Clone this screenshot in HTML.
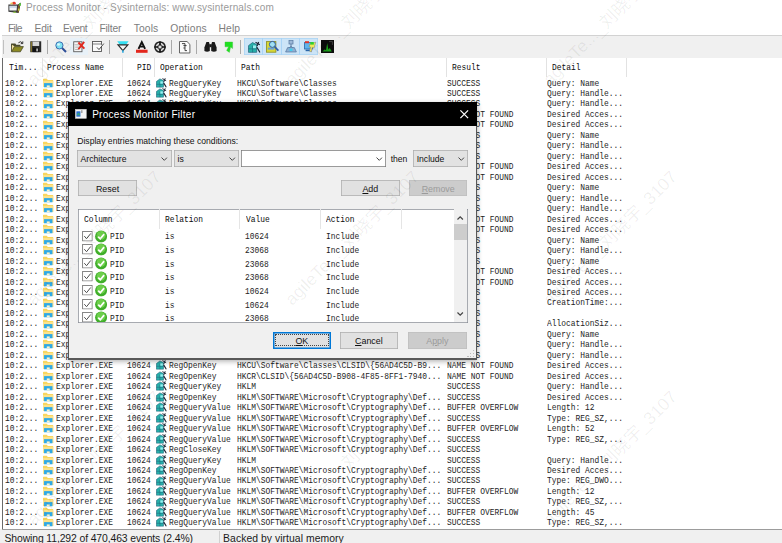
<!DOCTYPE html>
<html><head><meta charset="utf-8"><title>Process Monitor</title>
<style>
html,body{margin:0;padding:0;}
body{width:782px;height:543px;overflow:hidden;background:#fff;position:relative;font-family:"Liberation Sans","Noto Sans CJK SC",sans-serif;}
.t{position:absolute;white-space:pre;line-height:12px;font-family:"Liberation Sans","Noto Sans CJK SC",sans-serif;}
.m{position:absolute;white-space:pre;line-height:12px;font-family:"Liberation Mono","Noto Sans CJK SC",monospace;font-size:9.60px;transform:scaleX(0.8247);transform-origin:0 0;}
.r{position:absolute;}
.w{position:absolute;white-space:pre;font-size:17.5px;line-height:20px;color:rgba(0,0,0,.065);transform-origin:0 100%;transform:rotate(-45deg);font-family:"Liberation Sans","Noto Sans CJK SC",sans-serif;}
svg{position:absolute;overflow:visible;}
u{text-decoration:underline;text-underline-offset:0.5px;text-decoration-thickness:0.7px;}
</style></head><body>

<svg width="0" height="0" style="left:0;top:0"><defs>
<symbol id="fold" viewBox="0 0 10 9"><path d="M0 1.2 Q0 .6 .6 .6 H3.6 L4.6 1.8 H9.4 Q10 1.8 10 2.4 V8.4 H0 Z" fill="#f9d65f"/><rect x="0" y="2.8" width="10" height="5.8" fill="#fce28c"/><rect x="1" y="4.8" width="8" height="4.2" fill="#2fa9e6"/><rect x="3.6" y="7" width="2.8" height="2" fill="#fdf3c8"/></symbol>
<symbol id="reg" viewBox="0 0 11 10"><path d="M.4 3.6 L4 .9 L7.6 2.6 V9.5 H.4 Z" fill="#27b0aa" stroke="#1d5f78" stroke-width=".6"/><path d="M.4 6.4 H7.6 M4 3.6 V9.5" stroke="#1d5f78" stroke-width=".5"/><rect x="4.4" y="3.4" width="2.6" height="2.4" fill="#9af0f0"/><path d="M6.6 .6 L10.4 2.8 M9.4 .3 L8 4" stroke="#1a2433" stroke-width="1" fill="none"/><path d="M7.8 5 L10.6 9.6" stroke="#1a2433" stroke-width="1.1"/></symbol>
<symbol id="ball" viewBox="0 0 12 12"><circle cx="6" cy="6" r="5.9" fill="#3fae2a"/><circle cx="6" cy="5" r="4.4" fill="#7ed957" opacity=".75"/><path d="M3.2 6.2 L5.2 8.3 L9 3.8" stroke="#fff" stroke-width="1.7" fill="none"/></symbol>
<symbol id="chk" viewBox="0 0 10 10"><rect x=".4" y=".4" width="9.2" height="9.2" fill="#fff" stroke="#6e6e6e" stroke-width=".8"/><path d="M2 5 L4.2 7.4 L8.2 2.4" stroke="#444" stroke-width=".9" fill="none"/></symbol>
<symbol id="chev" viewBox="0 0 8 5"><path d="M.6 .6 L4 4 L7.4 .6" stroke="#3c3c3c" stroke-width="1.15" fill="none"/></symbol>
</defs></svg>

<svg style="left:7.8px;top:1px" width="13.4" height="12.6" viewBox="0 0 13.4 12.6"><path d="M.4 3.6 H10 L12.9 1.6 L10.6 12 L.4 10.8 Z" fill="#3b3b3b"/><path d="M1.4 4.8 H9 L8.6 9.6 H1.4 Z" fill="#f3f5f8"/><path d="M1.4 6 H9" stroke="#9db4cf" stroke-width=".9"/><path d="M10.2 4 L12.6 2.2 L10.8 11.6 L9.4 11.4 Z" fill="#7a5a2a"/><rect x="11.2" y="2.2" width="1.6" height="2.6" fill="#4fd03a"/><rect x="10" y="7.6" width="1.4" height="2" fill="#c8d43a"/><ellipse cx="6" cy="2.2" rx="1.8" ry="1.4" fill="#e23a2a"/><ellipse cx="3.6" cy="2.6" rx="1.3" ry="1" fill="#e8c95a"/><rect x="5.4" y="10.6" width="2.4" height="1.2" fill="#8ccf3a"/></svg>
<span class="t" style="left:26.00px;top:2.23px;font-size:10.00px;color:#9a9a9a;letter-spacing:0.162px;">Process Monitor - Sysinternals: www.sysinternals.com</span>
<span class="t" style="left:8.05px;top:22.73px;font-size:10.30px;color:#7d7d7d;letter-spacing:-0.749px;">File</span>
<span class="t" style="left:34.40px;top:22.73px;font-size:10.30px;color:#7d7d7d;letter-spacing:-0.083px;">Edit</span>
<span class="t" style="left:63.00px;top:22.73px;font-size:10.30px;color:#7d7d7d;letter-spacing:-0.410px;">Event</span>
<span class="t" style="left:99.40px;top:22.73px;font-size:10.30px;color:#7d7d7d;letter-spacing:-0.178px;">Filter</span>
<span class="t" style="left:133.70px;top:22.73px;font-size:10.30px;color:#7d7d7d;letter-spacing:0.114px;">Tools</span>
<span class="t" style="left:170.30px;top:22.73px;font-size:10.30px;color:#7d7d7d;letter-spacing:0.151px;">Options</span>
<span class="t" style="left:218.60px;top:22.73px;font-size:10.30px;color:#7d7d7d;letter-spacing:0.072px;">Help</span>
<div class="r" style="left:2.00px;top:35.80px;width:780.00px;height:22.00px;background:#f0f0f0;"></div>
<div class="r" style="left:2.00px;top:35.30px;width:780.00px;height:0.90px;background:#d2d2d2;"></div>
<div class="r" style="left:3.30px;top:40.00px;width:0.90px;height:13.60px;background:#c0c0c0;"></div>
<div class="r" style="left:46.60px;top:40.00px;width:0.90px;height:14.00px;background:#a9a9a9;"></div>
<div class="r" style="left:108.80px;top:40.00px;width:0.90px;height:14.00px;background:#a9a9a9;"></div>
<div class="r" style="left:171.20px;top:40.00px;width:0.90px;height:14.00px;background:#a9a9a9;"></div>
<div class="r" style="left:195.60px;top:40.00px;width:0.90px;height:14.00px;background:#a9a9a9;"></div>
<div class="r" style="left:239.60px;top:40.00px;width:0.90px;height:14.00px;background:#a9a9a9;"></div>
<div class="r" style="left:244.20px;top:37.80px;width:74.00px;height:16.80px;background:#cce4f7;box-shadow:inset 0 0 0 .75px #a9d3f5;"></div>
<div class="r" style="left:262.35px;top:37.80px;width:0.75px;height:16.80px;background:#a9d3f5;"></div>
<div class="r" style="left:280.85px;top:37.80px;width:0.75px;height:16.80px;background:#a9d3f5;"></div>
<div class="r" style="left:299.35px;top:37.80px;width:0.75px;height:16.80px;background:#a9d3f5;"></div>
<div class="r" style="left:70.00px;top:38.00px;width:18.00px;height:16.60px;background:#e8f1f8;"></div>
<svg style="left:11.20px;top:40.70px" width="12.80" height="11.20" viewBox="0 0 12.8 11.2"><path d="M.4 2.6 H4.4 L5.2 3.8 H9.4 V5.2 H.4 Z" fill="#4a4a2a"/><path d="M.6 3.4 L5.4 6.6 L.6 10.4 Z" fill="#f3e2a0"/><path d="M3.4 5.6 H12.4 L9.4 10.8 H.6 Z" fill="#8c8a24" stroke="#3a3a1a" stroke-width=".7"/><path d="M.5 2.8 V10.6" stroke="#3a3a1a" stroke-width=".8"/><path d="M7.4 1.8 Q9.6 -.4 11.4 2 M11.8 .4 V2.6 H9.8" stroke="#222" stroke-width=".9" fill="none"/></svg>
<svg style="left:29.50px;top:41.00px" width="11.50" height="11.50" viewBox="0 0 12 12"><rect x=".3" y=".3" width="11.4" height="11.4" fill="#2a2a2a"/><rect x=".8" y=".8" width="1.2" height="10.4" fill="#8a7a2c"/><rect x="2.6" y=".6" width="7" height="4.6" fill="#d8d8d8"/><rect x="3" y="7" width="6" height="4.6" fill="#111"/><rect x="6.6" y="7.8" width="1.6" height="3" fill="#ccc"/></svg>
<svg style="left:55.00px;top:40.50px" width="12.00" height="12.00" viewBox="0 0 12 12"><path d="M6.4 6.4 L11 11" stroke="#2d4f9a" stroke-width="2"/><circle cx="4.4" cy="4.4" r="3.6" fill="#7fe3f2" stroke="#3f6fb5" stroke-width="1"/><circle cx="3.6" cy="3.6" r="1.4" fill="#d8fbff"/></svg>
<svg style="left:72.50px;top:41.00px" width="12.00" height="11.50" viewBox="0 0 12 12"><rect x=".5" y=".8" width="8.6" height="10.4" fill="#f6f6f6" stroke="#555" stroke-width=".9"/><path d="M2 4 H7 M2 6.4 H7 M2 8.8 H6" stroke="#999" stroke-width=".8"/><path d="M5.4 1.6 L11.6 8 M11.4 1 L5.4 8.6" stroke="#e02a1f" stroke-width="2"/></svg>
<svg style="left:92.10px;top:41.00px" width="12.40" height="11.00" viewBox="0 0 12.4 11"><rect x=".5" y=".5" width="9" height="10" fill="#fbfbfb" stroke="#555" stroke-width=".9"/><path d="M.5 3 H9.5" stroke="#666" stroke-width=".8"/><path d="M5 6.4 L7 8.6 L11.8 2.6" stroke="#444" stroke-width="1" fill="#fff"/></svg>
<svg style="left:117.00px;top:40.50px" width="11.80" height="12.00" viewBox="0 0 12 12"><path d="M.2 .2 H11.8 L8.6 4.6 H3.4 Z" fill="#35dff2"/><path d="M1 3.8 H11 L6 9.6 Z" fill="#f6f6f6" stroke="#2a2a2a" stroke-width="1.2"/><path d="M6 9.4 V11.9" stroke="#2aa8e0" stroke-width="1.6"/></svg>
<svg style="left:135.60px;top:40.50px" width="11.60" height="12.00" viewBox="0 0 12 12"><path d="M2.6 8 L6 1 L9.4 8 M4 5.6 H8" stroke="#111" stroke-width="2" fill="none"/><rect x="0" y="8.8" width="12" height="3.2" fill="#e3261c"/></svg>
<svg style="left:154.00px;top:40.50px" width="12.00" height="12.00" viewBox="0 0 12 12"><circle cx="6" cy="6" r="5.1" fill="#dcdcdc" stroke="#222" stroke-width="1.5"/><circle cx="6" cy="6" r="2.3" fill="none" stroke="#333" stroke-width="1"/><path d="M6 .4 V4.4 M6 7.6 V11.6 M.4 6 H4.4 M7.6 6 H11.6" stroke="#111" stroke-width="1.7"/></svg>
<svg style="left:178.70px;top:40.50px" width="11.40" height="12.50" viewBox="0 0 11.4 12.5"><path d="M.5 .5 H8 L10.9 3.4 V12 H.5 Z" fill="#fbfbfb" stroke="#555" stroke-width=".9"/><path d="M3 2.6 H6 V5 M6 5 V9.6 H8 M6 7 H4.4 M4.4 4.6 H7.6" stroke="#333" stroke-width=".9" fill="none"/></svg>
<svg style="left:203.70px;top:41.00px" width="13.00" height="11.50" viewBox="0 0 13 11.5"><path d="M2.4 1 H5 L5.8 4 V10 Q3 11.6 .4 10 V6.4 Z" fill="#1a1a1a"/><path d="M10.6 1 H8 L7.2 4 V10 Q10 11.6 12.6 10 V6.4 Z" fill="#1a1a1a"/><rect x="5.4" y="3.2" width="2.2" height="3" fill="#1a1a1a"/></svg>
<svg style="left:224.00px;top:40.50px" width="9.60" height="12.00" viewBox="0 0 9.6 12"><path d="M1 1 H8.6 V7.6 L6.6 6 L5.4 11.4 L2.6 9.4 L4.6 5.8 L1 5.8 Z" fill="#20e020" stroke="#3fbf3f" stroke-width=".4"/></svg>
<svg style="left:248.00px;top:40.50px" width="12.50" height="12.50" viewBox="0 0 11 10"><use href="#reg"/></svg>
<svg style="left:266.00px;top:40.00px" width="13.00" height="13.00" viewBox="0 0 13 13"><rect x=".5" y="1.6" width="9.4" height="10.6" fill="#d8d838" stroke="#8a8a1c" stroke-width=".8"/><rect x="1.8" y="7.6" width="6.6" height="2" fill="#6aa0d8"/><circle cx="6.4" cy="4.4" r="3" fill="#9fe0f2" stroke="#2c5aa8" stroke-width="1"/><path d="M8.6 6.6 L12.4 10.6" stroke="#2c5aa8" stroke-width="1.6"/></svg>
<svg style="left:285.00px;top:40.00px" width="12.00" height="13.00" viewBox="0 0 12 13"><rect x="4" y=".6" width="4" height="3.4" fill="#9db8d8" stroke="#55779f" stroke-width=".7"/><path d="M6 4 V7 M2.4 9 L6 6.6 L9.6 9" stroke="#55779f" stroke-width="1" fill="none"/><path d="M.6 12 L2.6 7.6 H9.4 L11.4 12 Z" fill="#8fb0d4" stroke="#55779f" stroke-width=".7"/><rect x="4.6" y="8.6" width="2.8" height="2.4" fill="#3fd0f0"/></svg>
<svg style="left:303.60px;top:40.00px" width="12.40" height="13.00" viewBox="0 0 12.4 13"><rect x=".5" y="2.6" width="8" height="6.4" fill="#5fb4ec" stroke="#2c66a8" stroke-width=".8"/><rect x="1" y="1.2" width="4" height="2" fill="#e0352a"/><path d="M6 4 L11.8 2.2 L10 8 L8.2 7.6 L7.4 12 L5.4 11.2 L6.6 7.2 L5 6.6 Z" fill="#f0e85a" stroke="#777" stroke-width=".5"/><rect x="1.6" y="9.6" width="4" height="1.6" fill="#2c66a8"/><rect x="6.4" y="2" width="3.4" height="2.6" fill="#2fd02f"/></svg>
<svg style="left:320.60px;top:40.00px" width="13.00" height="13.00" viewBox="0 0 13 13"><rect width="13" height="13" fill="#0c0c0c"/><path d="M1.4 11.6 L3.6 9.4 L5 10.2 L6.2 3 L7.4 9.6 L8.8 8 L10.8 11.6 Z" fill="#1aa01a"/><path d="M8 1.6 H11.4 V5" stroke="#555" stroke-width=".7" fill="none"/></svg>
<div class="r" style="left:2.00px;top:57.80px;width:780.00px;height:471.20px;background:#fff;"></div>
<div class="r" style="left:2.00px;top:57.80px;width:0.90px;height:471.40px;background:#6a6a6a;"></div>
<div class="r" style="left:42.10px;top:58.00px;width:0.80px;height:19.00px;background:#e2e2e2;"></div>
<div class="r" style="left:122.10px;top:58.00px;width:0.80px;height:19.00px;background:#e2e2e2;"></div>
<div class="r" style="left:154.10px;top:58.00px;width:0.80px;height:19.00px;background:#e2e2e2;"></div>
<div class="r" style="left:234.60px;top:58.00px;width:0.80px;height:19.00px;background:#e2e2e2;"></div>
<div class="r" style="left:445.60px;top:58.00px;width:0.80px;height:19.00px;background:#e2e2e2;"></div>
<div class="r" style="left:545.50px;top:58.00px;width:0.80px;height:19.00px;background:#e2e2e2;"></div>
<div class="r" style="left:625.70px;top:58.00px;width:0.80px;height:19.00px;background:#e2e2e2;"></div>
<span class="m" style="left:8.60px;top:62.25px;color:#0a0a0a;">Tim...</span>
<span class="m" style="left:47.20px;top:62.25px;color:#0a0a0a;">Process Name</span>
<span class="m" style="left:136.55px;top:62.25px;color:#0a0a0a;">PID</span>
<span class="m" style="left:160.40px;top:62.25px;color:#0a0a0a;">Operation</span>
<span class="m" style="left:241.00px;top:62.25px;color:#0a0a0a;">Path</span>
<span class="m" style="left:452.00px;top:62.25px;color:#0a0a0a;">Result</span>
<span class="m" style="left:551.50px;top:62.25px;color:#0a0a0a;">Detail</span>
<span class="m" style="left:4.60px;top:77.55px;color:#1c1c1c;">10:2...</span>
<svg style="left:42.7px;top:77.70px" width="10.5" height="9.6"><use href="#fold"/></svg>
<span class="m" style="left:55.60px;top:77.55px;color:#1c1c1c;">Explorer.EXE</span>
<span class="m" style="left:126.85px;top:77.55px;color:#1c1c1c;">10624</span>
<svg style="left:155.6px;top:77.70px" width="10.8" height="9.8"><use href="#reg"/></svg>
<span class="m" style="left:168.80px;top:77.55px;color:#1c1c1c;">RegQueryKey</span>
<span class="m" style="left:236.60px;top:77.55px;color:#1c1c1c;">HKCU\Software\Classes</span>
<span class="m" style="left:447.20px;top:77.55px;color:#1c1c1c;">SUCCESS</span>
<span class="m" style="left:546.80px;top:77.55px;color:#1c1c1c;">Query: Name</span>
<span class="m" style="left:4.60px;top:88.02px;color:#1c1c1c;">10:2...</span>
<svg style="left:42.7px;top:88.17px" width="10.5" height="9.6"><use href="#fold"/></svg>
<span class="m" style="left:55.60px;top:88.02px;color:#1c1c1c;">Explorer.EXE</span>
<span class="m" style="left:126.85px;top:88.02px;color:#1c1c1c;">10624</span>
<svg style="left:155.6px;top:88.17px" width="10.8" height="9.8"><use href="#reg"/></svg>
<span class="m" style="left:168.80px;top:88.02px;color:#1c1c1c;">RegQueryKey</span>
<span class="m" style="left:236.60px;top:88.02px;color:#1c1c1c;">HKCU\Software\Classes</span>
<span class="m" style="left:447.20px;top:88.02px;color:#1c1c1c;">SUCCESS</span>
<span class="m" style="left:546.80px;top:88.02px;color:#1c1c1c;">Query: Handle...</span>
<span class="m" style="left:4.60px;top:98.49px;color:#1c1c1c;">10:2...</span>
<svg style="left:42.7px;top:98.64px" width="10.5" height="9.6"><use href="#fold"/></svg>
<span class="m" style="left:55.60px;top:98.49px;color:#1c1c1c;">Explorer.EXE</span>
<span class="m" style="left:126.85px;top:98.49px;color:#1c1c1c;">10624</span>
<svg style="left:155.6px;top:98.64px" width="10.8" height="9.8"><use href="#reg"/></svg>
<span class="m" style="left:168.80px;top:98.49px;color:#1c1c1c;">RegQueryKey</span>
<span class="m" style="left:236.60px;top:98.49px;color:#1c1c1c;">HKCU\Software\Classes</span>
<span class="m" style="left:447.20px;top:98.49px;color:#1c1c1c;">SUCCESS</span>
<span class="m" style="left:546.80px;top:98.49px;color:#1c1c1c;">Query: Handle...</span>
<span class="m" style="left:4.60px;top:108.96px;color:#1c1c1c;">10:2...</span>
<svg style="left:42.7px;top:109.11px" width="10.5" height="9.6"><use href="#fold"/></svg>
<span class="m" style="left:55.60px;top:108.96px;color:#1c1c1c;">Explorer.EXE</span>
<span class="m" style="left:126.85px;top:108.96px;color:#1c1c1c;">10624</span>
<svg style="left:155.6px;top:109.11px" width="10.8" height="9.8"><use href="#reg"/></svg>
<span class="m" style="left:168.80px;top:108.96px;color:#1c1c1c;">RegOpenKey</span>
<span class="m" style="left:236.60px;top:108.96px;color:#1c1c1c;">HKCU\Software\Classes\CLSID\{56AD4C5D-B9...</span>
<span class="m" style="left:447.20px;top:108.96px;color:#1c1c1c;">NAME NOT FOUND</span>
<span class="m" style="left:546.80px;top:108.96px;color:#1c1c1c;">Desired Acces...</span>
<span class="m" style="left:4.60px;top:119.43px;color:#1c1c1c;">10:2...</span>
<svg style="left:42.7px;top:119.58px" width="10.5" height="9.6"><use href="#fold"/></svg>
<span class="m" style="left:55.60px;top:119.43px;color:#1c1c1c;">Explorer.EXE</span>
<span class="m" style="left:126.85px;top:119.43px;color:#1c1c1c;">10624</span>
<svg style="left:155.6px;top:119.58px" width="10.8" height="9.8"><use href="#reg"/></svg>
<span class="m" style="left:168.80px;top:119.43px;color:#1c1c1c;">RegOpenKey</span>
<span class="m" style="left:236.60px;top:119.43px;color:#1c1c1c;">HKCR\CLSID\{56AD4C5D-B908-4F85-8FF1-7940...</span>
<span class="m" style="left:447.20px;top:119.43px;color:#1c1c1c;">NAME NOT FOUND</span>
<span class="m" style="left:546.80px;top:119.43px;color:#1c1c1c;">Desired Acces...</span>
<span class="m" style="left:4.60px;top:129.90px;color:#1c1c1c;">10:2...</span>
<svg style="left:42.7px;top:130.05px" width="10.5" height="9.6"><use href="#fold"/></svg>
<span class="m" style="left:55.60px;top:129.90px;color:#1c1c1c;">Explorer.EXE</span>
<span class="m" style="left:126.85px;top:129.90px;color:#1c1c1c;">10624</span>
<svg style="left:155.6px;top:130.05px" width="10.8" height="9.8"><use href="#reg"/></svg>
<span class="m" style="left:168.80px;top:129.90px;color:#1c1c1c;">RegQueryKey</span>
<span class="m" style="left:236.60px;top:129.90px;color:#1c1c1c;">HKCU\Software\Classes</span>
<span class="m" style="left:447.20px;top:129.90px;color:#1c1c1c;">SUCCESS</span>
<span class="m" style="left:546.80px;top:129.90px;color:#1c1c1c;">Query: Name</span>
<span class="m" style="left:4.60px;top:140.37px;color:#1c1c1c;">10:2...</span>
<svg style="left:42.7px;top:140.53px" width="10.5" height="9.6"><use href="#fold"/></svg>
<span class="m" style="left:55.60px;top:140.37px;color:#1c1c1c;">Explorer.EXE</span>
<span class="m" style="left:126.85px;top:140.37px;color:#1c1c1c;">10624</span>
<svg style="left:155.6px;top:140.53px" width="10.8" height="9.8"><use href="#reg"/></svg>
<span class="m" style="left:168.80px;top:140.37px;color:#1c1c1c;">RegQueryKey</span>
<span class="m" style="left:236.60px;top:140.37px;color:#1c1c1c;">HKCU\Software\Classes</span>
<span class="m" style="left:447.20px;top:140.37px;color:#1c1c1c;">SUCCESS</span>
<span class="m" style="left:546.80px;top:140.37px;color:#1c1c1c;">Query: Handle...</span>
<span class="m" style="left:4.60px;top:150.84px;color:#1c1c1c;">10:2...</span>
<svg style="left:42.7px;top:151.00px" width="10.5" height="9.6"><use href="#fold"/></svg>
<span class="m" style="left:55.60px;top:150.84px;color:#1c1c1c;">Explorer.EXE</span>
<span class="m" style="left:126.85px;top:150.84px;color:#1c1c1c;">10624</span>
<svg style="left:155.6px;top:151.00px" width="10.8" height="9.8"><use href="#reg"/></svg>
<span class="m" style="left:168.80px;top:150.84px;color:#1c1c1c;">RegQueryKey</span>
<span class="m" style="left:236.60px;top:150.84px;color:#1c1c1c;">HKCU\Software\Classes</span>
<span class="m" style="left:447.20px;top:150.84px;color:#1c1c1c;">SUCCESS</span>
<span class="m" style="left:546.80px;top:150.84px;color:#1c1c1c;">Query: Handle...</span>
<span class="m" style="left:4.60px;top:161.31px;color:#1c1c1c;">10:2...</span>
<svg style="left:42.7px;top:161.47px" width="10.5" height="9.6"><use href="#fold"/></svg>
<span class="m" style="left:55.60px;top:161.31px;color:#1c1c1c;">Explorer.EXE</span>
<span class="m" style="left:126.85px;top:161.31px;color:#1c1c1c;">10624</span>
<svg style="left:155.6px;top:161.47px" width="10.8" height="9.8"><use href="#reg"/></svg>
<span class="m" style="left:168.80px;top:161.31px;color:#1c1c1c;">RegOpenKey</span>
<span class="m" style="left:236.60px;top:161.31px;color:#1c1c1c;">HKCU\Software\Classes\CLSID\{56AD4C5D-B9...</span>
<span class="m" style="left:447.20px;top:161.31px;color:#1c1c1c;">NAME NOT FOUND</span>
<span class="m" style="left:546.80px;top:161.31px;color:#1c1c1c;">Desired Acces...</span>
<span class="m" style="left:4.60px;top:171.79px;color:#1c1c1c;">10:2...</span>
<svg style="left:42.7px;top:171.94px" width="10.5" height="9.6"><use href="#fold"/></svg>
<span class="m" style="left:55.60px;top:171.79px;color:#1c1c1c;">Explorer.EXE</span>
<span class="m" style="left:126.85px;top:171.79px;color:#1c1c1c;">10624</span>
<svg style="left:155.6px;top:171.94px" width="10.8" height="9.8"><use href="#reg"/></svg>
<span class="m" style="left:168.80px;top:171.79px;color:#1c1c1c;">RegOpenKey</span>
<span class="m" style="left:236.60px;top:171.79px;color:#1c1c1c;">HKCR\CLSID\{56AD4C5D-B908-4F85-8FF1-7940...</span>
<span class="m" style="left:447.20px;top:171.79px;color:#1c1c1c;">NAME NOT FOUND</span>
<span class="m" style="left:546.80px;top:171.79px;color:#1c1c1c;">Desired Acces...</span>
<span class="m" style="left:4.60px;top:182.26px;color:#1c1c1c;">10:2...</span>
<svg style="left:42.7px;top:182.41px" width="10.5" height="9.6"><use href="#fold"/></svg>
<span class="m" style="left:55.60px;top:182.26px;color:#1c1c1c;">Explorer.EXE</span>
<span class="m" style="left:126.85px;top:182.26px;color:#1c1c1c;">10624</span>
<svg style="left:155.6px;top:182.41px" width="10.8" height="9.8"><use href="#reg"/></svg>
<span class="m" style="left:168.80px;top:182.26px;color:#1c1c1c;">RegQueryKey</span>
<span class="m" style="left:236.60px;top:182.26px;color:#1c1c1c;">HKCU\Software\Classes</span>
<span class="m" style="left:447.20px;top:182.26px;color:#1c1c1c;">SUCCESS</span>
<span class="m" style="left:546.80px;top:182.26px;color:#1c1c1c;">Query: Name</span>
<span class="m" style="left:4.60px;top:192.73px;color:#1c1c1c;">10:2...</span>
<svg style="left:42.7px;top:192.88px" width="10.5" height="9.6"><use href="#fold"/></svg>
<span class="m" style="left:55.60px;top:192.73px;color:#1c1c1c;">Explorer.EXE</span>
<span class="m" style="left:126.85px;top:192.73px;color:#1c1c1c;">10624</span>
<svg style="left:155.6px;top:192.88px" width="10.8" height="9.8"><use href="#reg"/></svg>
<span class="m" style="left:168.80px;top:192.73px;color:#1c1c1c;">RegQueryKey</span>
<span class="m" style="left:236.60px;top:192.73px;color:#1c1c1c;">HKCU\Software\Classes</span>
<span class="m" style="left:447.20px;top:192.73px;color:#1c1c1c;">SUCCESS</span>
<span class="m" style="left:546.80px;top:192.73px;color:#1c1c1c;">Query: Handle...</span>
<span class="m" style="left:4.60px;top:203.20px;color:#1c1c1c;">10:2...</span>
<svg style="left:42.7px;top:203.35px" width="10.5" height="9.6"><use href="#fold"/></svg>
<span class="m" style="left:55.60px;top:203.20px;color:#1c1c1c;">Explorer.EXE</span>
<span class="m" style="left:126.85px;top:203.20px;color:#1c1c1c;">10624</span>
<svg style="left:155.6px;top:203.35px" width="10.8" height="9.8"><use href="#reg"/></svg>
<span class="m" style="left:168.80px;top:203.20px;color:#1c1c1c;">RegQueryKey</span>
<span class="m" style="left:236.60px;top:203.20px;color:#1c1c1c;">HKCU\Software\Classes</span>
<span class="m" style="left:447.20px;top:203.20px;color:#1c1c1c;">SUCCESS</span>
<span class="m" style="left:546.80px;top:203.20px;color:#1c1c1c;">Query: Handle...</span>
<span class="m" style="left:4.60px;top:213.67px;color:#1c1c1c;">10:2...</span>
<svg style="left:42.7px;top:213.82px" width="10.5" height="9.6"><use href="#fold"/></svg>
<span class="m" style="left:55.60px;top:213.67px;color:#1c1c1c;">Explorer.EXE</span>
<span class="m" style="left:126.85px;top:213.67px;color:#1c1c1c;">10624</span>
<svg style="left:155.6px;top:213.82px" width="10.8" height="9.8"><use href="#reg"/></svg>
<span class="m" style="left:168.80px;top:213.67px;color:#1c1c1c;">RegOpenKey</span>
<span class="m" style="left:236.60px;top:213.67px;color:#1c1c1c;">HKCU\Software\Classes\CLSID\{56AD4C5D-B9...</span>
<span class="m" style="left:447.20px;top:213.67px;color:#1c1c1c;">NAME NOT FOUND</span>
<span class="m" style="left:546.80px;top:213.67px;color:#1c1c1c;">Desired Acces...</span>
<span class="m" style="left:4.60px;top:224.14px;color:#1c1c1c;">10:2...</span>
<svg style="left:42.7px;top:224.29px" width="10.5" height="9.6"><use href="#fold"/></svg>
<span class="m" style="left:55.60px;top:224.14px;color:#1c1c1c;">Explorer.EXE</span>
<span class="m" style="left:126.85px;top:224.14px;color:#1c1c1c;">10624</span>
<svg style="left:155.6px;top:224.29px" width="10.8" height="9.8"><use href="#reg"/></svg>
<span class="m" style="left:168.80px;top:224.14px;color:#1c1c1c;">RegOpenKey</span>
<span class="m" style="left:236.60px;top:224.14px;color:#1c1c1c;">HKCR\CLSID\{56AD4C5D-B908-4F85-8FF1-7940...</span>
<span class="m" style="left:447.20px;top:224.14px;color:#1c1c1c;">NAME NOT FOUND</span>
<span class="m" style="left:546.80px;top:224.14px;color:#1c1c1c;">Desired Acces...</span>
<span class="m" style="left:4.60px;top:234.61px;color:#1c1c1c;">10:2...</span>
<svg style="left:42.7px;top:234.76px" width="10.5" height="9.6"><use href="#fold"/></svg>
<span class="m" style="left:55.60px;top:234.61px;color:#1c1c1c;">Explorer.EXE</span>
<span class="m" style="left:126.85px;top:234.61px;color:#1c1c1c;">10624</span>
<svg style="left:155.6px;top:234.76px" width="10.8" height="9.8"><use href="#reg"/></svg>
<span class="m" style="left:168.80px;top:234.61px;color:#1c1c1c;">RegQueryKey</span>
<span class="m" style="left:236.60px;top:234.61px;color:#1c1c1c;">HKCU\Software\Classes</span>
<span class="m" style="left:447.20px;top:234.61px;color:#1c1c1c;">SUCCESS</span>
<span class="m" style="left:546.80px;top:234.61px;color:#1c1c1c;">Query: Name</span>
<span class="m" style="left:4.60px;top:245.08px;color:#1c1c1c;">10:2...</span>
<svg style="left:42.7px;top:245.24px" width="10.5" height="9.6"><use href="#fold"/></svg>
<span class="m" style="left:55.60px;top:245.08px;color:#1c1c1c;">Explorer.EXE</span>
<span class="m" style="left:126.85px;top:245.08px;color:#1c1c1c;">10624</span>
<svg style="left:155.6px;top:245.24px" width="10.8" height="9.8"><use href="#reg"/></svg>
<span class="m" style="left:168.80px;top:245.08px;color:#1c1c1c;">RegQueryKey</span>
<span class="m" style="left:236.60px;top:245.08px;color:#1c1c1c;">HKCU\Software\Classes</span>
<span class="m" style="left:447.20px;top:245.08px;color:#1c1c1c;">SUCCESS</span>
<span class="m" style="left:546.80px;top:245.08px;color:#1c1c1c;">Query: Handle...</span>
<span class="m" style="left:4.60px;top:255.55px;color:#1c1c1c;">10:2...</span>
<svg style="left:42.7px;top:255.71px" width="10.5" height="9.6"><use href="#fold"/></svg>
<span class="m" style="left:55.60px;top:255.55px;color:#1c1c1c;">Explorer.EXE</span>
<span class="m" style="left:126.85px;top:255.55px;color:#1c1c1c;">10624</span>
<svg style="left:155.6px;top:255.71px" width="10.8" height="9.8"><use href="#reg"/></svg>
<span class="m" style="left:168.80px;top:255.55px;color:#1c1c1c;">RegQueryKey</span>
<span class="m" style="left:236.60px;top:255.55px;color:#1c1c1c;">HKCU\Software\Classes</span>
<span class="m" style="left:447.20px;top:255.55px;color:#1c1c1c;">SUCCESS</span>
<span class="m" style="left:546.80px;top:255.55px;color:#1c1c1c;">Query: Name</span>
<span class="m" style="left:4.60px;top:266.02px;color:#1c1c1c;">10:2...</span>
<svg style="left:42.7px;top:266.18px" width="10.5" height="9.6"><use href="#fold"/></svg>
<span class="m" style="left:55.60px;top:266.02px;color:#1c1c1c;">Explorer.EXE</span>
<span class="m" style="left:126.85px;top:266.02px;color:#1c1c1c;">10624</span>
<svg style="left:155.6px;top:266.18px" width="10.8" height="9.8"><use href="#reg"/></svg>
<span class="m" style="left:168.80px;top:266.02px;color:#1c1c1c;">RegOpenKey</span>
<span class="m" style="left:236.60px;top:266.02px;color:#1c1c1c;">HKCU\Software\Classes\CLSID\{56AD4C5D-B9...</span>
<span class="m" style="left:447.20px;top:266.02px;color:#1c1c1c;">NAME NOT FOUND</span>
<span class="m" style="left:546.80px;top:266.02px;color:#1c1c1c;">Desired Acces...</span>
<span class="m" style="left:4.60px;top:276.50px;color:#1c1c1c;">10:2...</span>
<svg style="left:42.7px;top:276.65px" width="10.5" height="9.6"><use href="#fold"/></svg>
<span class="m" style="left:55.60px;top:276.50px;color:#1c1c1c;">Explorer.EXE</span>
<span class="m" style="left:126.85px;top:276.50px;color:#1c1c1c;">10624</span>
<svg style="left:155.6px;top:276.65px" width="10.8" height="9.8"><use href="#reg"/></svg>
<span class="m" style="left:168.80px;top:276.50px;color:#1c1c1c;">RegOpenKey</span>
<span class="m" style="left:236.60px;top:276.50px;color:#1c1c1c;">HKCR\CLSID\{56AD4C5D-B908-4F85-8FF1-7940...</span>
<span class="m" style="left:447.20px;top:276.50px;color:#1c1c1c;">NAME NOT FOUND</span>
<span class="m" style="left:546.80px;top:276.50px;color:#1c1c1c;">Desired Acces...</span>
<span class="m" style="left:4.60px;top:286.97px;color:#1c1c1c;">10:2...</span>
<svg style="left:42.7px;top:287.12px" width="10.5" height="9.6"><use href="#fold"/></svg>
<span class="m" style="left:55.60px;top:286.97px;color:#1c1c1c;">Explorer.EXE</span>
<span class="m" style="left:126.85px;top:286.97px;color:#1c1c1c;">10624</span>
<svg style="left:155.6px;top:287.12px" width="10.8" height="9.8"><use href="#reg"/></svg>
<span class="m" style="left:168.80px;top:286.97px;color:#1c1c1c;">CreateFile</span>
<span class="m" style="left:236.60px;top:286.97px;color:#1c1c1c;">C:\Windows\System32\shell32.dll</span>
<span class="m" style="left:447.20px;top:286.97px;color:#1c1c1c;">SUCCESS</span>
<span class="m" style="left:546.80px;top:286.97px;color:#1c1c1c;">Desired Acces...</span>
<span class="m" style="left:4.60px;top:297.44px;color:#1c1c1c;">10:2...</span>
<svg style="left:42.7px;top:297.59px" width="10.5" height="9.6"><use href="#fold"/></svg>
<span class="m" style="left:55.60px;top:297.44px;color:#1c1c1c;">Explorer.EXE</span>
<span class="m" style="left:126.85px;top:297.44px;color:#1c1c1c;">10624</span>
<svg style="left:155.6px;top:297.59px" width="10.8" height="9.8"><use href="#reg"/></svg>
<span class="m" style="left:168.80px;top:297.44px;color:#1c1c1c;">QueryBasicInfo</span>
<span class="m" style="left:236.60px;top:297.44px;color:#1c1c1c;">C:\Windows\System32\shell32.dll</span>
<span class="m" style="left:447.20px;top:297.44px;color:#1c1c1c;">SUCCESS</span>
<span class="m" style="left:546.80px;top:297.44px;color:#1c1c1c;">CreationTime:...</span>
<span class="m" style="left:4.60px;top:307.91px;color:#1c1c1c;">10:2...</span>
<svg style="left:42.7px;top:308.06px" width="10.5" height="9.6"><use href="#fold"/></svg>
<span class="m" style="left:55.60px;top:307.91px;color:#1c1c1c;">Explorer.EXE</span>
<span class="m" style="left:126.85px;top:307.91px;color:#1c1c1c;">10624</span>
<svg style="left:155.6px;top:308.06px" width="10.8" height="9.8"><use href="#reg"/></svg>
<span class="m" style="left:168.80px;top:307.91px;color:#1c1c1c;">CloseFile</span>
<span class="m" style="left:236.60px;top:307.91px;color:#1c1c1c;">C:\Windows\System32\shell32.dll</span>
<span class="m" style="left:447.20px;top:307.91px;color:#1c1c1c;">SUCCESS</span>
<span class="m" style="left:4.60px;top:318.38px;color:#1c1c1c;">10:2...</span>
<svg style="left:42.7px;top:318.53px" width="10.5" height="9.6"><use href="#fold"/></svg>
<span class="m" style="left:55.60px;top:318.38px;color:#1c1c1c;">Explorer.EXE</span>
<span class="m" style="left:126.85px;top:318.38px;color:#1c1c1c;">10624</span>
<svg style="left:155.6px;top:318.53px" width="10.8" height="9.8"><use href="#reg"/></svg>
<span class="m" style="left:168.80px;top:318.38px;color:#1c1c1c;">QueryStandardI</span>
<span class="m" style="left:236.60px;top:318.38px;color:#1c1c1c;">C:\Windows\System32\shell32.dll</span>
<span class="m" style="left:447.20px;top:318.38px;color:#1c1c1c;">SUCCESS</span>
<span class="m" style="left:546.80px;top:318.38px;color:#1c1c1c;">AllocationSiz...</span>
<span class="m" style="left:4.60px;top:328.85px;color:#1c1c1c;">10:2...</span>
<svg style="left:42.7px;top:329.00px" width="10.5" height="9.6"><use href="#fold"/></svg>
<span class="m" style="left:55.60px;top:328.85px;color:#1c1c1c;">Explorer.EXE</span>
<span class="m" style="left:126.85px;top:328.85px;color:#1c1c1c;">10624</span>
<svg style="left:155.6px;top:329.00px" width="10.8" height="9.8"><use href="#reg"/></svg>
<span class="m" style="left:168.80px;top:328.85px;color:#1c1c1c;">RegQueryKey</span>
<span class="m" style="left:236.60px;top:328.85px;color:#1c1c1c;">HKCU\Software\Classes</span>
<span class="m" style="left:447.20px;top:328.85px;color:#1c1c1c;">SUCCESS</span>
<span class="m" style="left:546.80px;top:328.85px;color:#1c1c1c;">Query: Name</span>
<span class="m" style="left:4.60px;top:339.32px;color:#1c1c1c;">10:2...</span>
<svg style="left:42.7px;top:339.48px" width="10.5" height="9.6"><use href="#fold"/></svg>
<span class="m" style="left:55.60px;top:339.32px;color:#1c1c1c;">Explorer.EXE</span>
<span class="m" style="left:126.85px;top:339.32px;color:#1c1c1c;">10624</span>
<svg style="left:155.6px;top:339.48px" width="10.8" height="9.8"><use href="#reg"/></svg>
<span class="m" style="left:168.80px;top:339.32px;color:#1c1c1c;">RegQueryKey</span>
<span class="m" style="left:236.60px;top:339.32px;color:#1c1c1c;">HKCU\Software\Classes</span>
<span class="m" style="left:447.20px;top:339.32px;color:#1c1c1c;">SUCCESS</span>
<span class="m" style="left:546.80px;top:339.32px;color:#1c1c1c;">Query: Handle...</span>
<span class="m" style="left:4.60px;top:349.79px;color:#1c1c1c;">10:2...</span>
<svg style="left:42.7px;top:349.95px" width="10.5" height="9.6"><use href="#fold"/></svg>
<span class="m" style="left:55.60px;top:349.79px;color:#1c1c1c;">Explorer.EXE</span>
<span class="m" style="left:126.85px;top:349.79px;color:#1c1c1c;">10624</span>
<svg style="left:155.6px;top:349.95px" width="10.8" height="9.8"><use href="#reg"/></svg>
<span class="m" style="left:168.80px;top:349.79px;color:#1c1c1c;">RegQueryKey</span>
<span class="m" style="left:236.60px;top:349.79px;color:#1c1c1c;">HKCU\Software\Classes</span>
<span class="m" style="left:447.20px;top:349.79px;color:#1c1c1c;">SUCCESS</span>
<span class="m" style="left:546.80px;top:349.79px;color:#1c1c1c;">Query: Handle...</span>
<span class="m" style="left:4.60px;top:360.26px;color:#1c1c1c;">10:2...</span>
<svg style="left:42.7px;top:360.42px" width="10.5" height="9.6"><use href="#fold"/></svg>
<span class="m" style="left:55.60px;top:360.26px;color:#1c1c1c;">Explorer.EXE</span>
<span class="m" style="left:126.85px;top:360.26px;color:#1c1c1c;">10624</span>
<svg style="left:155.6px;top:360.42px" width="10.8" height="9.8"><use href="#reg"/></svg>
<span class="m" style="left:168.80px;top:360.26px;color:#1c1c1c;">RegOpenKey</span>
<span class="m" style="left:236.60px;top:360.26px;color:#1c1c1c;">HKCU\Software\Classes\CLSID\{56AD4C5D-B9...</span>
<span class="m" style="left:447.20px;top:360.26px;color:#1c1c1c;">NAME NOT FOUND</span>
<span class="m" style="left:546.80px;top:360.26px;color:#1c1c1c;">Desired Acces...</span>
<span class="m" style="left:4.60px;top:370.73px;color:#1c1c1c;">10:2...</span>
<svg style="left:42.7px;top:370.89px" width="10.5" height="9.6"><use href="#fold"/></svg>
<span class="m" style="left:55.60px;top:370.73px;color:#1c1c1c;">Explorer.EXE</span>
<span class="m" style="left:126.85px;top:370.73px;color:#1c1c1c;">10624</span>
<svg style="left:155.6px;top:370.89px" width="10.8" height="9.8"><use href="#reg"/></svg>
<span class="m" style="left:168.80px;top:370.73px;color:#1c1c1c;">RegOpenKey</span>
<span class="m" style="left:236.60px;top:370.73px;color:#1c1c1c;">HKCR\CLSID\{56AD4C5D-B908-4F85-8FF1-7940...</span>
<span class="m" style="left:447.20px;top:370.73px;color:#1c1c1c;">NAME NOT FOUND</span>
<span class="m" style="left:546.80px;top:370.73px;color:#1c1c1c;">Desired Acces...</span>
<span class="m" style="left:4.60px;top:381.21px;color:#1c1c1c;">10:2...</span>
<svg style="left:42.7px;top:381.36px" width="10.5" height="9.6"><use href="#fold"/></svg>
<span class="m" style="left:55.60px;top:381.21px;color:#1c1c1c;">Explorer.EXE</span>
<span class="m" style="left:126.85px;top:381.21px;color:#1c1c1c;">10624</span>
<svg style="left:155.6px;top:381.36px" width="10.8" height="9.8"><use href="#reg"/></svg>
<span class="m" style="left:168.80px;top:381.21px;color:#1c1c1c;">RegQueryKey</span>
<span class="m" style="left:236.60px;top:381.21px;color:#1c1c1c;">HKLM</span>
<span class="m" style="left:447.20px;top:381.21px;color:#1c1c1c;">SUCCESS</span>
<span class="m" style="left:546.80px;top:381.21px;color:#1c1c1c;">Query: Handle...</span>
<span class="m" style="left:4.60px;top:391.68px;color:#1c1c1c;">10:2...</span>
<svg style="left:42.7px;top:391.83px" width="10.5" height="9.6"><use href="#fold"/></svg>
<span class="m" style="left:55.60px;top:391.68px;color:#1c1c1c;">Explorer.EXE</span>
<span class="m" style="left:126.85px;top:391.68px;color:#1c1c1c;">10624</span>
<svg style="left:155.6px;top:391.83px" width="10.8" height="9.8"><use href="#reg"/></svg>
<span class="m" style="left:168.80px;top:391.68px;color:#1c1c1c;">RegOpenKey</span>
<span class="m" style="left:236.60px;top:391.68px;color:#1c1c1c;">HKLM\SOFTWARE\Microsoft\Cryptography\Def...</span>
<span class="m" style="left:447.20px;top:391.68px;color:#1c1c1c;">SUCCESS</span>
<span class="m" style="left:546.80px;top:391.68px;color:#1c1c1c;">Desired Acces...</span>
<span class="m" style="left:4.60px;top:402.15px;color:#1c1c1c;">10:2...</span>
<svg style="left:42.7px;top:402.30px" width="10.5" height="9.6"><use href="#fold"/></svg>
<span class="m" style="left:55.60px;top:402.15px;color:#1c1c1c;">Explorer.EXE</span>
<span class="m" style="left:126.85px;top:402.15px;color:#1c1c1c;">10624</span>
<svg style="left:155.6px;top:402.30px" width="10.8" height="9.8"><use href="#reg"/></svg>
<span class="m" style="left:168.80px;top:402.15px;color:#1c1c1c;">RegQueryValue</span>
<span class="m" style="left:236.60px;top:402.15px;color:#1c1c1c;">HKLM\SOFTWARE\Microsoft\Cryptography\Def...</span>
<span class="m" style="left:447.20px;top:402.15px;color:#1c1c1c;">BUFFER OVERFLOW</span>
<span class="m" style="left:546.80px;top:402.15px;color:#1c1c1c;">Length: 12</span>
<span class="m" style="left:4.60px;top:412.62px;color:#1c1c1c;">10:2...</span>
<svg style="left:42.7px;top:412.77px" width="10.5" height="9.6"><use href="#fold"/></svg>
<span class="m" style="left:55.60px;top:412.62px;color:#1c1c1c;">Explorer.EXE</span>
<span class="m" style="left:126.85px;top:412.62px;color:#1c1c1c;">10624</span>
<svg style="left:155.6px;top:412.77px" width="10.8" height="9.8"><use href="#reg"/></svg>
<span class="m" style="left:168.80px;top:412.62px;color:#1c1c1c;">RegQueryValue</span>
<span class="m" style="left:236.60px;top:412.62px;color:#1c1c1c;">HKLM\SOFTWARE\Microsoft\Cryptography\Def...</span>
<span class="m" style="left:447.20px;top:412.62px;color:#1c1c1c;">SUCCESS</span>
<span class="m" style="left:546.80px;top:412.62px;color:#1c1c1c;">Type: REG_SZ,...</span>
<span class="m" style="left:4.60px;top:423.09px;color:#1c1c1c;">10:2...</span>
<svg style="left:42.7px;top:423.24px" width="10.5" height="9.6"><use href="#fold"/></svg>
<span class="m" style="left:55.60px;top:423.09px;color:#1c1c1c;">Explorer.EXE</span>
<span class="m" style="left:126.85px;top:423.09px;color:#1c1c1c;">10624</span>
<svg style="left:155.6px;top:423.24px" width="10.8" height="9.8"><use href="#reg"/></svg>
<span class="m" style="left:168.80px;top:423.09px;color:#1c1c1c;">RegQueryValue</span>
<span class="m" style="left:236.60px;top:423.09px;color:#1c1c1c;">HKLM\SOFTWARE\Microsoft\Cryptography\Def...</span>
<span class="m" style="left:447.20px;top:423.09px;color:#1c1c1c;">BUFFER OVERFLOW</span>
<span class="m" style="left:546.80px;top:423.09px;color:#1c1c1c;">Length: 52</span>
<span class="m" style="left:4.60px;top:433.56px;color:#1c1c1c;">10:2...</span>
<svg style="left:42.7px;top:433.71px" width="10.5" height="9.6"><use href="#fold"/></svg>
<span class="m" style="left:55.60px;top:433.56px;color:#1c1c1c;">Explorer.EXE</span>
<span class="m" style="left:126.85px;top:433.56px;color:#1c1c1c;">10624</span>
<svg style="left:155.6px;top:433.71px" width="10.8" height="9.8"><use href="#reg"/></svg>
<span class="m" style="left:168.80px;top:433.56px;color:#1c1c1c;">RegQueryValue</span>
<span class="m" style="left:236.60px;top:433.56px;color:#1c1c1c;">HKLM\SOFTWARE\Microsoft\Cryptography\Def...</span>
<span class="m" style="left:447.20px;top:433.56px;color:#1c1c1c;">SUCCESS</span>
<span class="m" style="left:546.80px;top:433.56px;color:#1c1c1c;">Type: REG_SZ,...</span>
<span class="m" style="left:4.60px;top:444.03px;color:#1c1c1c;">10:2...</span>
<svg style="left:42.7px;top:444.19px" width="10.5" height="9.6"><use href="#fold"/></svg>
<span class="m" style="left:55.60px;top:444.03px;color:#1c1c1c;">Explorer.EXE</span>
<span class="m" style="left:126.85px;top:444.03px;color:#1c1c1c;">10624</span>
<svg style="left:155.6px;top:444.19px" width="10.8" height="9.8"><use href="#reg"/></svg>
<span class="m" style="left:168.80px;top:444.03px;color:#1c1c1c;">RegCloseKey</span>
<span class="m" style="left:236.60px;top:444.03px;color:#1c1c1c;">HKLM\SOFTWARE\Microsoft\Cryptography\Def...</span>
<span class="m" style="left:447.20px;top:444.03px;color:#1c1c1c;">SUCCESS</span>
<span class="m" style="left:4.60px;top:454.50px;color:#1c1c1c;">10:2...</span>
<svg style="left:42.7px;top:454.66px" width="10.5" height="9.6"><use href="#fold"/></svg>
<span class="m" style="left:55.60px;top:454.50px;color:#1c1c1c;">Explorer.EXE</span>
<span class="m" style="left:126.85px;top:454.50px;color:#1c1c1c;">10624</span>
<svg style="left:155.6px;top:454.66px" width="10.8" height="9.8"><use href="#reg"/></svg>
<span class="m" style="left:168.80px;top:454.50px;color:#1c1c1c;">RegQueryKey</span>
<span class="m" style="left:236.60px;top:454.50px;color:#1c1c1c;">HKLM</span>
<span class="m" style="left:447.20px;top:454.50px;color:#1c1c1c;">SUCCESS</span>
<span class="m" style="left:546.80px;top:454.50px;color:#1c1c1c;">Query: Handle...</span>
<span class="m" style="left:4.60px;top:464.97px;color:#1c1c1c;">10:2...</span>
<svg style="left:42.7px;top:465.13px" width="10.5" height="9.6"><use href="#fold"/></svg>
<span class="m" style="left:55.60px;top:464.97px;color:#1c1c1c;">Explorer.EXE</span>
<span class="m" style="left:126.85px;top:464.97px;color:#1c1c1c;">10624</span>
<svg style="left:155.6px;top:465.13px" width="10.8" height="9.8"><use href="#reg"/></svg>
<span class="m" style="left:168.80px;top:464.97px;color:#1c1c1c;">RegOpenKey</span>
<span class="m" style="left:236.60px;top:464.97px;color:#1c1c1c;">HKLM\SOFTWARE\Microsoft\Cryptography\Def...</span>
<span class="m" style="left:447.20px;top:464.97px;color:#1c1c1c;">SUCCESS</span>
<span class="m" style="left:546.80px;top:464.97px;color:#1c1c1c;">Desired Acces...</span>
<span class="m" style="left:4.60px;top:475.44px;color:#1c1c1c;">10:2...</span>
<svg style="left:42.7px;top:475.60px" width="10.5" height="9.6"><use href="#fold"/></svg>
<span class="m" style="left:55.60px;top:475.44px;color:#1c1c1c;">Explorer.EXE</span>
<span class="m" style="left:126.85px;top:475.44px;color:#1c1c1c;">10624</span>
<svg style="left:155.6px;top:475.60px" width="10.8" height="9.8"><use href="#reg"/></svg>
<span class="m" style="left:168.80px;top:475.44px;color:#1c1c1c;">RegQueryValue</span>
<span class="m" style="left:236.60px;top:475.44px;color:#1c1c1c;">HKLM\SOFTWARE\Microsoft\Cryptography\Def...</span>
<span class="m" style="left:447.20px;top:475.44px;color:#1c1c1c;">SUCCESS</span>
<span class="m" style="left:546.80px;top:475.44px;color:#1c1c1c;">Type: REG_DWO...</span>
<span class="m" style="left:4.60px;top:485.92px;color:#1c1c1c;">10:2...</span>
<svg style="left:42.7px;top:486.07px" width="10.5" height="9.6"><use href="#fold"/></svg>
<span class="m" style="left:55.60px;top:485.92px;color:#1c1c1c;">Explorer.EXE</span>
<span class="m" style="left:126.85px;top:485.92px;color:#1c1c1c;">10624</span>
<svg style="left:155.6px;top:486.07px" width="10.8" height="9.8"><use href="#reg"/></svg>
<span class="m" style="left:168.80px;top:485.92px;color:#1c1c1c;">RegQueryValue</span>
<span class="m" style="left:236.60px;top:485.92px;color:#1c1c1c;">HKLM\SOFTWARE\Microsoft\Cryptography\Def...</span>
<span class="m" style="left:447.20px;top:485.92px;color:#1c1c1c;">BUFFER OVERFLOW</span>
<span class="m" style="left:546.80px;top:485.92px;color:#1c1c1c;">Length: 12</span>
<span class="m" style="left:4.60px;top:496.39px;color:#1c1c1c;">10:2...</span>
<svg style="left:42.7px;top:496.54px" width="10.5" height="9.6"><use href="#fold"/></svg>
<span class="m" style="left:55.60px;top:496.39px;color:#1c1c1c;">Explorer.EXE</span>
<span class="m" style="left:126.85px;top:496.39px;color:#1c1c1c;">10624</span>
<svg style="left:155.6px;top:496.54px" width="10.8" height="9.8"><use href="#reg"/></svg>
<span class="m" style="left:168.80px;top:496.39px;color:#1c1c1c;">RegQueryValue</span>
<span class="m" style="left:236.60px;top:496.39px;color:#1c1c1c;">HKLM\SOFTWARE\Microsoft\Cryptography\Def...</span>
<span class="m" style="left:447.20px;top:496.39px;color:#1c1c1c;">SUCCESS</span>
<span class="m" style="left:546.80px;top:496.39px;color:#1c1c1c;">Type: REG_SZ,...</span>
<span class="m" style="left:4.60px;top:506.86px;color:#1c1c1c;">10:2...</span>
<svg style="left:42.7px;top:507.01px" width="10.5" height="9.6"><use href="#fold"/></svg>
<span class="m" style="left:55.60px;top:506.86px;color:#1c1c1c;">Explorer.EXE</span>
<span class="m" style="left:126.85px;top:506.86px;color:#1c1c1c;">10624</span>
<svg style="left:155.6px;top:507.01px" width="10.8" height="9.8"><use href="#reg"/></svg>
<span class="m" style="left:168.80px;top:506.86px;color:#1c1c1c;">RegQueryValue</span>
<span class="m" style="left:236.60px;top:506.86px;color:#1c1c1c;">HKLM\SOFTWARE\Microsoft\Cryptography\Def...</span>
<span class="m" style="left:447.20px;top:506.86px;color:#1c1c1c;">BUFFER OVERFLOW</span>
<span class="m" style="left:546.80px;top:506.86px;color:#1c1c1c;">Length: 45</span>
<span class="m" style="left:4.60px;top:517.33px;color:#1c1c1c;">10:2...</span>
<svg style="left:42.7px;top:517.48px" width="10.5" height="9.6"><use href="#fold"/></svg>
<span class="m" style="left:55.60px;top:517.33px;color:#1c1c1c;">Explorer.EXE</span>
<span class="m" style="left:126.85px;top:517.33px;color:#1c1c1c;">10624</span>
<svg style="left:155.6px;top:517.48px" width="10.8" height="9.8"><use href="#reg"/></svg>
<span class="m" style="left:168.80px;top:517.33px;color:#1c1c1c;">RegQueryValue</span>
<span class="m" style="left:236.60px;top:517.33px;color:#1c1c1c;">HKLM\SOFTWARE\Microsoft\Cryptography\Def...</span>
<span class="m" style="left:447.20px;top:517.33px;color:#1c1c1c;">SUCCESS</span>
<span class="m" style="left:546.80px;top:517.33px;color:#1c1c1c;">Type: REG_SZ,...</span>
<div class="r" style="left:0.00px;top:529.30px;width:782.00px;height:14.00px;background:#f0f0f0;"></div>
<div class="r" style="left:2.00px;top:528.60px;width:780.00px;height:0.80px;background:#9c9c9c;"></div>
<div class="r" style="left:218.50px;top:531.00px;width:0.80px;height:12.00px;background:#d0d0d0;"></div>
<span class="t" style="left:4.50px;top:532.99px;font-size:10.40px;color:#1a1a1a;letter-spacing:-0.111px;">Showing 11,292 of 470,463 events (2.4%)</span>
<span class="t" style="left:223.10px;top:532.99px;font-size:10.40px;color:#1a1a1a;letter-spacing:0.046px;">Backed by virtual memory</span>
<div class="r" style="left:67.80px;top:101.50px;width:409.40px;height:258.00px;background:#585858;box-shadow:0 1px 5px 0.5px rgba(0,0,0,.30);"></div>
<div class="r" style="left:68.80px;top:101.90px;width:406.90px;height:256.10px;background:#f0f0f0;"></div>
<div class="r" style="left:67.80px;top:101.50px;width:409.40px;height:24.20px;background:#000;"></div>
<svg style="left:75.30px;top:108.80px" width="11.60" height="9.60" viewBox="0 0 12 10"><rect x=".3" y=".3" width="11.4" height="9.4" fill="#f4f4f4" stroke="#cfcfcf" stroke-width=".6"/><rect x="1.4" y="2.4" width="4.2" height="5.6" fill="#2c6fd1"/><path d="M2.4 6.6 L3.6 4.4 L4.8 6.6" stroke="#39c04a" stroke-width="1" fill="none"/><rect x="6.6" y="1.2" width="1" height="3" fill="#777"/></svg>
<span class="t" style="left:92.20px;top:108.83px;font-size:10.00px;color:#fff;letter-spacing:0.264px;">Process Monitor Filter</span>
<svg style="left:460.20px;top:109.60px" width="8.50" height="8.50" viewBox="0 0 8.5 8.5"><path d="M.4 .4 L8.1 8.1 M8.1 .4 L.4 8.1" stroke="#fff" stroke-width="1.25"/></svg>
<span class="t" style="left:77.20px;top:135.12px;font-size:8.60px;color:#111;letter-spacing:0.012px;">Display entries matching these conditions:</span>
<div class="r" style="left:77.30px;top:150.10px;width:94.30px;height:16.50px;background:#e2e2e2;box-shadow:inset 0 0 0 .75px #adadad;"></div>
<span class="t" style="left:80.60px;top:153.02px;font-size:8.60px;color:#111;">Architecture</span>
<svg style="left:161.20px;top:156.60px" width="6.6" height="4.2"><use href="#chev"/></svg>
<div class="r" style="left:174.30px;top:150.10px;width:64.70px;height:16.50px;background:#e2e2e2;box-shadow:inset 0 0 0 .75px #adadad;"></div>
<span class="t" style="left:177.60px;top:153.02px;font-size:8.60px;color:#111;">is</span>
<svg style="left:228.60px;top:156.60px" width="6.6" height="4.2"><use href="#chev"/></svg>
<div class="r" style="left:241.30px;top:150.10px;width:145.10px;height:16.50px;background:#fff;box-shadow:inset 0 0 0 .75px #7a7a7a;"></div>
<svg style="left:376.00px;top:156.60px" width="6.6" height="4.2"><use href="#chev"/></svg>
<span class="t" style="left:390.70px;top:153.02px;font-size:8.60px;color:#111;letter-spacing:-0.046px;">then</span>
<div class="r" style="left:413.40px;top:150.10px;width:54.80px;height:16.50px;background:#e2e2e2;box-shadow:inset 0 0 0 .75px #adadad;"></div>
<span class="t" style="left:416.70px;top:153.02px;font-size:8.60px;color:#111;">Include</span>
<svg style="left:457.80px;top:156.60px" width="6.6" height="4.2"><use href="#chev"/></svg>
<div class="r" style="left:78.40px;top:180.00px;width:58.30px;height:16.40px;background:#e1e1e1;box-shadow:inset 0 0 0 .75px #adadad;"></div>
<span class="t" style="left:95.93px;top:183.01px;font-size:8.90px;color:#111;">Reset</span>
<div class="r" style="left:341.10px;top:180.00px;width:58.50px;height:16.40px;background:#e1e1e1;box-shadow:inset 0 0 0 .75px #adadad;"></div>
<span class="t" style="left:362.43px;top:183.01px;font-size:8.90px;color:#111;"><u>A</u>dd</span>
<div class="r" style="left:409.10px;top:180.00px;width:58.30px;height:16.40px;background:#cccccc;box-shadow:inset 0 0 0 .75px #bfbfbf;"></div>
<span class="t" style="left:421.68px;top:183.01px;font-size:8.90px;color:#9b9b9b;"><u>R</u>emove</span>
<div class="r" style="left:272.70px;top:332.00px;width:58.30px;height:16.70px;background:#e1e1e1;box-shadow:inset 0 0 0 1.5px #0078d7;"></div>
<div class="r" style="left:274.90px;top:334.20px;width:53.90px;height:12.30px;border:.75px dotted #444;box-sizing:border-box"></div>
<span class="t" style="left:295.42px;top:335.01px;font-size:8.90px;color:#111;"><u>O</u>K</span>
<div class="r" style="left:339.80px;top:332.00px;width:58.20px;height:16.70px;background:#e1e1e1;box-shadow:inset 0 0 0 .75px #adadad;"></div>
<span class="t" style="left:355.05px;top:335.01px;font-size:8.90px;color:#111;"><u>C</u>ancel</span>
<div class="r" style="left:408.00px;top:332.00px;width:58.70px;height:16.70px;background:#cccccc;box-shadow:inset 0 0 0 .75px #bfbfbf;"></div>
<span class="t" style="left:426.22px;top:335.01px;font-size:8.90px;color:#9b9b9b;">A<u>p</u>ply</span>
<div class="r" style="left:77.60px;top:208.50px;width:390.60px;height:114.10px;background:#fff;box-shadow:inset 0 0 0 .75px #8a8e96;overflow:hidden;"></div>
<div class="r" style="left:158.60px;top:209.40px;width:0.80px;height:19.60px;background:#e5e5e5;"></div>
<div class="r" style="left:239.40px;top:209.40px;width:0.80px;height:19.60px;background:#e5e5e5;"></div>
<div class="r" style="left:319.80px;top:209.40px;width:0.80px;height:19.60px;background:#e5e5e5;"></div>
<div class="r" style="left:400.70px;top:209.40px;width:0.80px;height:19.60px;background:#e5e5e5;"></div>
<span class="m" style="left:84.20px;top:214.35px;color:#0a0a0a;">Column</span>
<span class="m" style="left:164.80px;top:214.35px;color:#0a0a0a;">Relation</span>
<span class="m" style="left:245.70px;top:214.35px;color:#0a0a0a;">Value</span>
<span class="m" style="left:326.00px;top:214.35px;color:#0a0a0a;">Action</span>
<div class="r" style="left:78.40px;top:229.00px;width:376.20px;height:92.80px;overflow:hidden">
<svg style="left:3.80px;top:1.60px" width="10.8" height="10.4"><use href="#chk"/></svg>
<svg style="left:16.90px;top:0.70px" width="12.2" height="12.8"><use href="#ball"/></svg>
<span class="m" style="left:31.50px;top:2.35px;color:#1c1c1c;">PID</span>
<span class="m" style="left:86.70px;top:2.35px;color:#1c1c1c;">is</span>
<span class="m" style="left:166.90px;top:2.35px;color:#1c1c1c;">10624</span>
<span class="m" style="left:247.90px;top:2.35px;color:#1c1c1c;">Include</span>
<svg style="left:3.80px;top:15.23px" width="10.8" height="10.4"><use href="#chk"/></svg>
<svg style="left:16.90px;top:14.33px" width="12.2" height="12.8"><use href="#ball"/></svg>
<span class="m" style="left:31.50px;top:15.98px;color:#1c1c1c;">PID</span>
<span class="m" style="left:86.70px;top:15.98px;color:#1c1c1c;">is</span>
<span class="m" style="left:166.90px;top:15.98px;color:#1c1c1c;">23068</span>
<span class="m" style="left:247.90px;top:15.98px;color:#1c1c1c;">Include</span>
<svg style="left:3.80px;top:28.86px" width="10.8" height="10.4"><use href="#chk"/></svg>
<svg style="left:16.90px;top:27.96px" width="12.2" height="12.8"><use href="#ball"/></svg>
<span class="m" style="left:31.50px;top:29.61px;color:#1c1c1c;">PID</span>
<span class="m" style="left:86.70px;top:29.61px;color:#1c1c1c;">is</span>
<span class="m" style="left:166.90px;top:29.61px;color:#1c1c1c;">23068</span>
<span class="m" style="left:247.90px;top:29.61px;color:#1c1c1c;">Include</span>
<svg style="left:3.80px;top:42.49px" width="10.8" height="10.4"><use href="#chk"/></svg>
<svg style="left:16.90px;top:41.59px" width="12.2" height="12.8"><use href="#ball"/></svg>
<span class="m" style="left:31.50px;top:43.24px;color:#1c1c1c;">PID</span>
<span class="m" style="left:86.70px;top:43.24px;color:#1c1c1c;">is</span>
<span class="m" style="left:166.90px;top:43.24px;color:#1c1c1c;">23068</span>
<span class="m" style="left:247.90px;top:43.24px;color:#1c1c1c;">Include</span>
<svg style="left:3.80px;top:56.12px" width="10.8" height="10.4"><use href="#chk"/></svg>
<svg style="left:16.90px;top:55.22px" width="12.2" height="12.8"><use href="#ball"/></svg>
<span class="m" style="left:31.50px;top:56.87px;color:#1c1c1c;">PID</span>
<span class="m" style="left:86.70px;top:56.87px;color:#1c1c1c;">is</span>
<span class="m" style="left:166.90px;top:56.87px;color:#1c1c1c;">10624</span>
<span class="m" style="left:247.90px;top:56.87px;color:#1c1c1c;">Include</span>
<svg style="left:3.80px;top:69.75px" width="10.8" height="10.4"><use href="#chk"/></svg>
<svg style="left:16.90px;top:68.85px" width="12.2" height="12.8"><use href="#ball"/></svg>
<span class="m" style="left:31.50px;top:70.50px;color:#1c1c1c;">PID</span>
<span class="m" style="left:86.70px;top:70.50px;color:#1c1c1c;">is</span>
<span class="m" style="left:166.90px;top:70.50px;color:#1c1c1c;">10624</span>
<span class="m" style="left:247.90px;top:70.50px;color:#1c1c1c;">Include</span>
<svg style="left:3.80px;top:83.38px" width="10.8" height="10.4"><use href="#chk"/></svg>
<svg style="left:16.90px;top:82.48px" width="12.2" height="12.8"><use href="#ball"/></svg>
<span class="m" style="left:31.50px;top:84.13px;color:#1c1c1c;">PID</span>
<span class="m" style="left:86.70px;top:84.13px;color:#1c1c1c;">is</span>
<span class="m" style="left:166.90px;top:84.13px;color:#1c1c1c;">23068</span>
<span class="m" style="left:247.90px;top:84.13px;color:#1c1c1c;">Include</span>
</div>
<div class="r" style="left:454.00px;top:209.30px;width:12.80px;height:112.50px;background:#f0f0f0;"></div>
<div class="r" style="left:454.00px;top:224.00px;width:12.80px;height:15.80px;background:#cdcdcd;"></div>
<svg style="left:457.20px;top:215.60px" width="6.40" height="4.00" viewBox="0 0 8 5"><path d="M.6 4.4 L4 1 L7.4 4.4" stroke="#444" stroke-width="1.5" fill="none"/></svg>
<svg style="left:457.20px;top:312.40px" width="6.40" height="4.00" viewBox="0 0 8 5"><path d="M.6 .6 L4 4 L7.4 .6" stroke="#444" stroke-width="1.5" fill="none"/></svg>
<div class="r" style="left:472.70px;top:355.60px;width:1.20px;height:1.20px;background:#bdbdbd;"></div>
<div class="r" style="left:470.00px;top:355.60px;width:1.20px;height:1.20px;background:#bdbdbd;"></div>
<div class="r" style="left:467.40px;top:355.60px;width:1.20px;height:1.20px;background:#bdbdbd;"></div>
<div class="r" style="left:472.70px;top:352.90px;width:1.20px;height:1.20px;background:#bdbdbd;"></div>
<div class="r" style="left:470.00px;top:352.90px;width:1.20px;height:1.20px;background:#bdbdbd;"></div>
<div class="r" style="left:472.70px;top:350.10px;width:1.20px;height:1.20px;background:#bdbdbd;"></div>
<span class="w" style="left:-221px;top:69px">agileTe..._刘晓宇_3107</span>
<span class="w" style="left:37px;top:69px">agileTe..._刘晓宇_3107</span>
<span class="w" style="left:295px;top:69px">agileTe..._刘晓宇_3107</span>
<span class="w" style="left:553px;top:69px">agileTe..._刘晓宇_3107</span>
<span class="w" style="left:811px;top:69px">agileTe..._刘晓宇_3107</span>
<span class="w" style="left:-221px;top:289px">agileTe..._刘晓宇_3107</span>
<span class="w" style="left:37px;top:289px">agileTe..._刘晓宇_3107</span>
<span class="w" style="left:295px;top:289px">agileTe..._刘晓宇_3107</span>
<span class="w" style="left:553px;top:289px">agileTe..._刘晓宇_3107</span>
<span class="w" style="left:811px;top:289px">agileTe..._刘晓宇_3107</span>
<span class="w" style="left:-221px;top:509px">agileTe..._刘晓宇_3107</span>
<span class="w" style="left:37px;top:509px">agileTe..._刘晓宇_3107</span>
<span class="w" style="left:295px;top:509px">agileTe..._刘晓宇_3107</span>
<span class="w" style="left:553px;top:509px">agileTe..._刘晓宇_3107</span>
<span class="w" style="left:811px;top:509px">agileTe..._刘晓宇_3107</span>
<span class="w" style="left:-221px;top:729px">agileTe..._刘晓宇_3107</span>
<span class="w" style="left:37px;top:729px">agileTe..._刘晓宇_3107</span>
<span class="w" style="left:295px;top:729px">agileTe..._刘晓宇_3107</span>
<span class="w" style="left:553px;top:729px">agileTe..._刘晓宇_3107</span>
<span class="w" style="left:811px;top:729px">agileTe..._刘晓宇_3107</span>
</body></html>
